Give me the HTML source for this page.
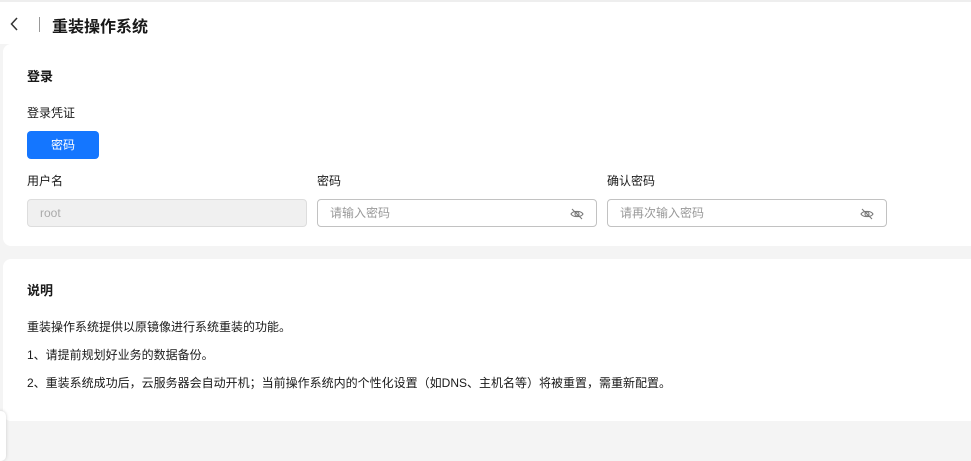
<!DOCTYPE html><html><head><meta charset="utf-8"><style>
*{margin:0;padding:0;box-sizing:border-box}
body{width:971px;height:456px;overflow:hidden;background:#f4f4f4;font-family:"Liberation Sans","Noto Sans CJK SC",sans-serif;color:#191919;position:relative}
.hdr{position:absolute;left:0;top:0;width:971px;height:44px;background:#fff;border-top:2px solid #eee}
.title{position:absolute;left:52px;top:11px;font-size:16px;font-weight:bold}
.sep{position:absolute;left:39px;top:15px;width:1px;height:15px;background:#999}
.card{position:absolute;left:3px;width:980px;background:#fff;border-radius:8px}
.h{position:absolute;left:24px;font-size:13px;font-weight:bold}
.t{position:absolute;font-size:12px;color:#191919;white-space:nowrap}
.btn{position:absolute;left:24px;top:87px;width:72px;height:28px;background:#1476ff;color:#fff;border-radius:4px;font-size:12px;text-align:center;line-height:28px}
.in{position:absolute;top:155px;width:280px;height:28px;border:1px solid #c2c2c2;border-radius:4px;font-size:12px;color:#999;padding-left:12px;line-height:26px}
.in svg{position:absolute;right:12px;top:8px}
</style></head><body>
<div class="hdr">
<svg style="position:absolute;left:10px;top:15px" width="10" height="14" viewBox="0 0 10 14"><path d="M7 1L1.5 7 7 13" fill="none" stroke="#333" stroke-width="1.5"/></svg>
<div class="sep"></div><div class="title">重装操作系统</div></div>
<div class="card" style="top:44px;height:202px">
<div class="h" style="top:22px">登录</div>
<div class="t" style="left:24px;top:60px">登录凭证</div>
<div class="btn">密码</div>
<div class="t" style="left:24px;top:128px">用户名</div>
<div class="t" style="left:314px;top:128px">密码</div>
<div class="t" style="left:604px;top:128px">确认密码</div>
<div class="in" style="left:24px;background:#f0f0f0;border-color:#ddd;color:#aaa">root</div>
<div class="in" style="left:314px">请输入密码<svg width="14" height="12" viewBox="0 0 14 12"><path d="M1 6C3 2.5 11 2.5 13 6C11 9.5 3 9.5 1 6Z" fill="none" stroke="#777" stroke-width="1.1"/><circle cx="7" cy="6" r="2" fill="none" stroke="#777" stroke-width="1.1"/><path d="M2 1L12 11" stroke="#777" stroke-width="1.1"/></svg></div>
<div class="in" style="left:604px">请再次输入密码<svg width="14" height="12" viewBox="0 0 14 12"><path d="M1 6C3 2.5 11 2.5 13 6C11 9.5 3 9.5 1 6Z" fill="none" stroke="#777" stroke-width="1.1"/><circle cx="7" cy="6" r="2" fill="none" stroke="#777" stroke-width="1.1"/><path d="M2 1L12 11" stroke="#777" stroke-width="1.1"/></svg></div>
</div>
<div class="card" style="top:259px;height:162px">
<div class="h" style="top:21px">说明</div>
<div class="t" style="left:24px;top:59px">重装操作系统提供以原镜像进行系统重装的功能。</div>
<div class="t" style="left:24px;top:87px">1、请提前规划好业务的数据备份。</div>
<div class="t" style="left:24px;top:115px">2、重装系统成功后，云服务器会自动开机；当前操作系统内的个性化设置（如DNS、主机名等）将被重置，需重新配置。</div>
</div>
<div style="position:absolute;left:-4px;top:411px;width:10px;height:50px;background:#fff;border-radius:5px;box-shadow:0 0 3px #ccc"></div>
</body></html>
